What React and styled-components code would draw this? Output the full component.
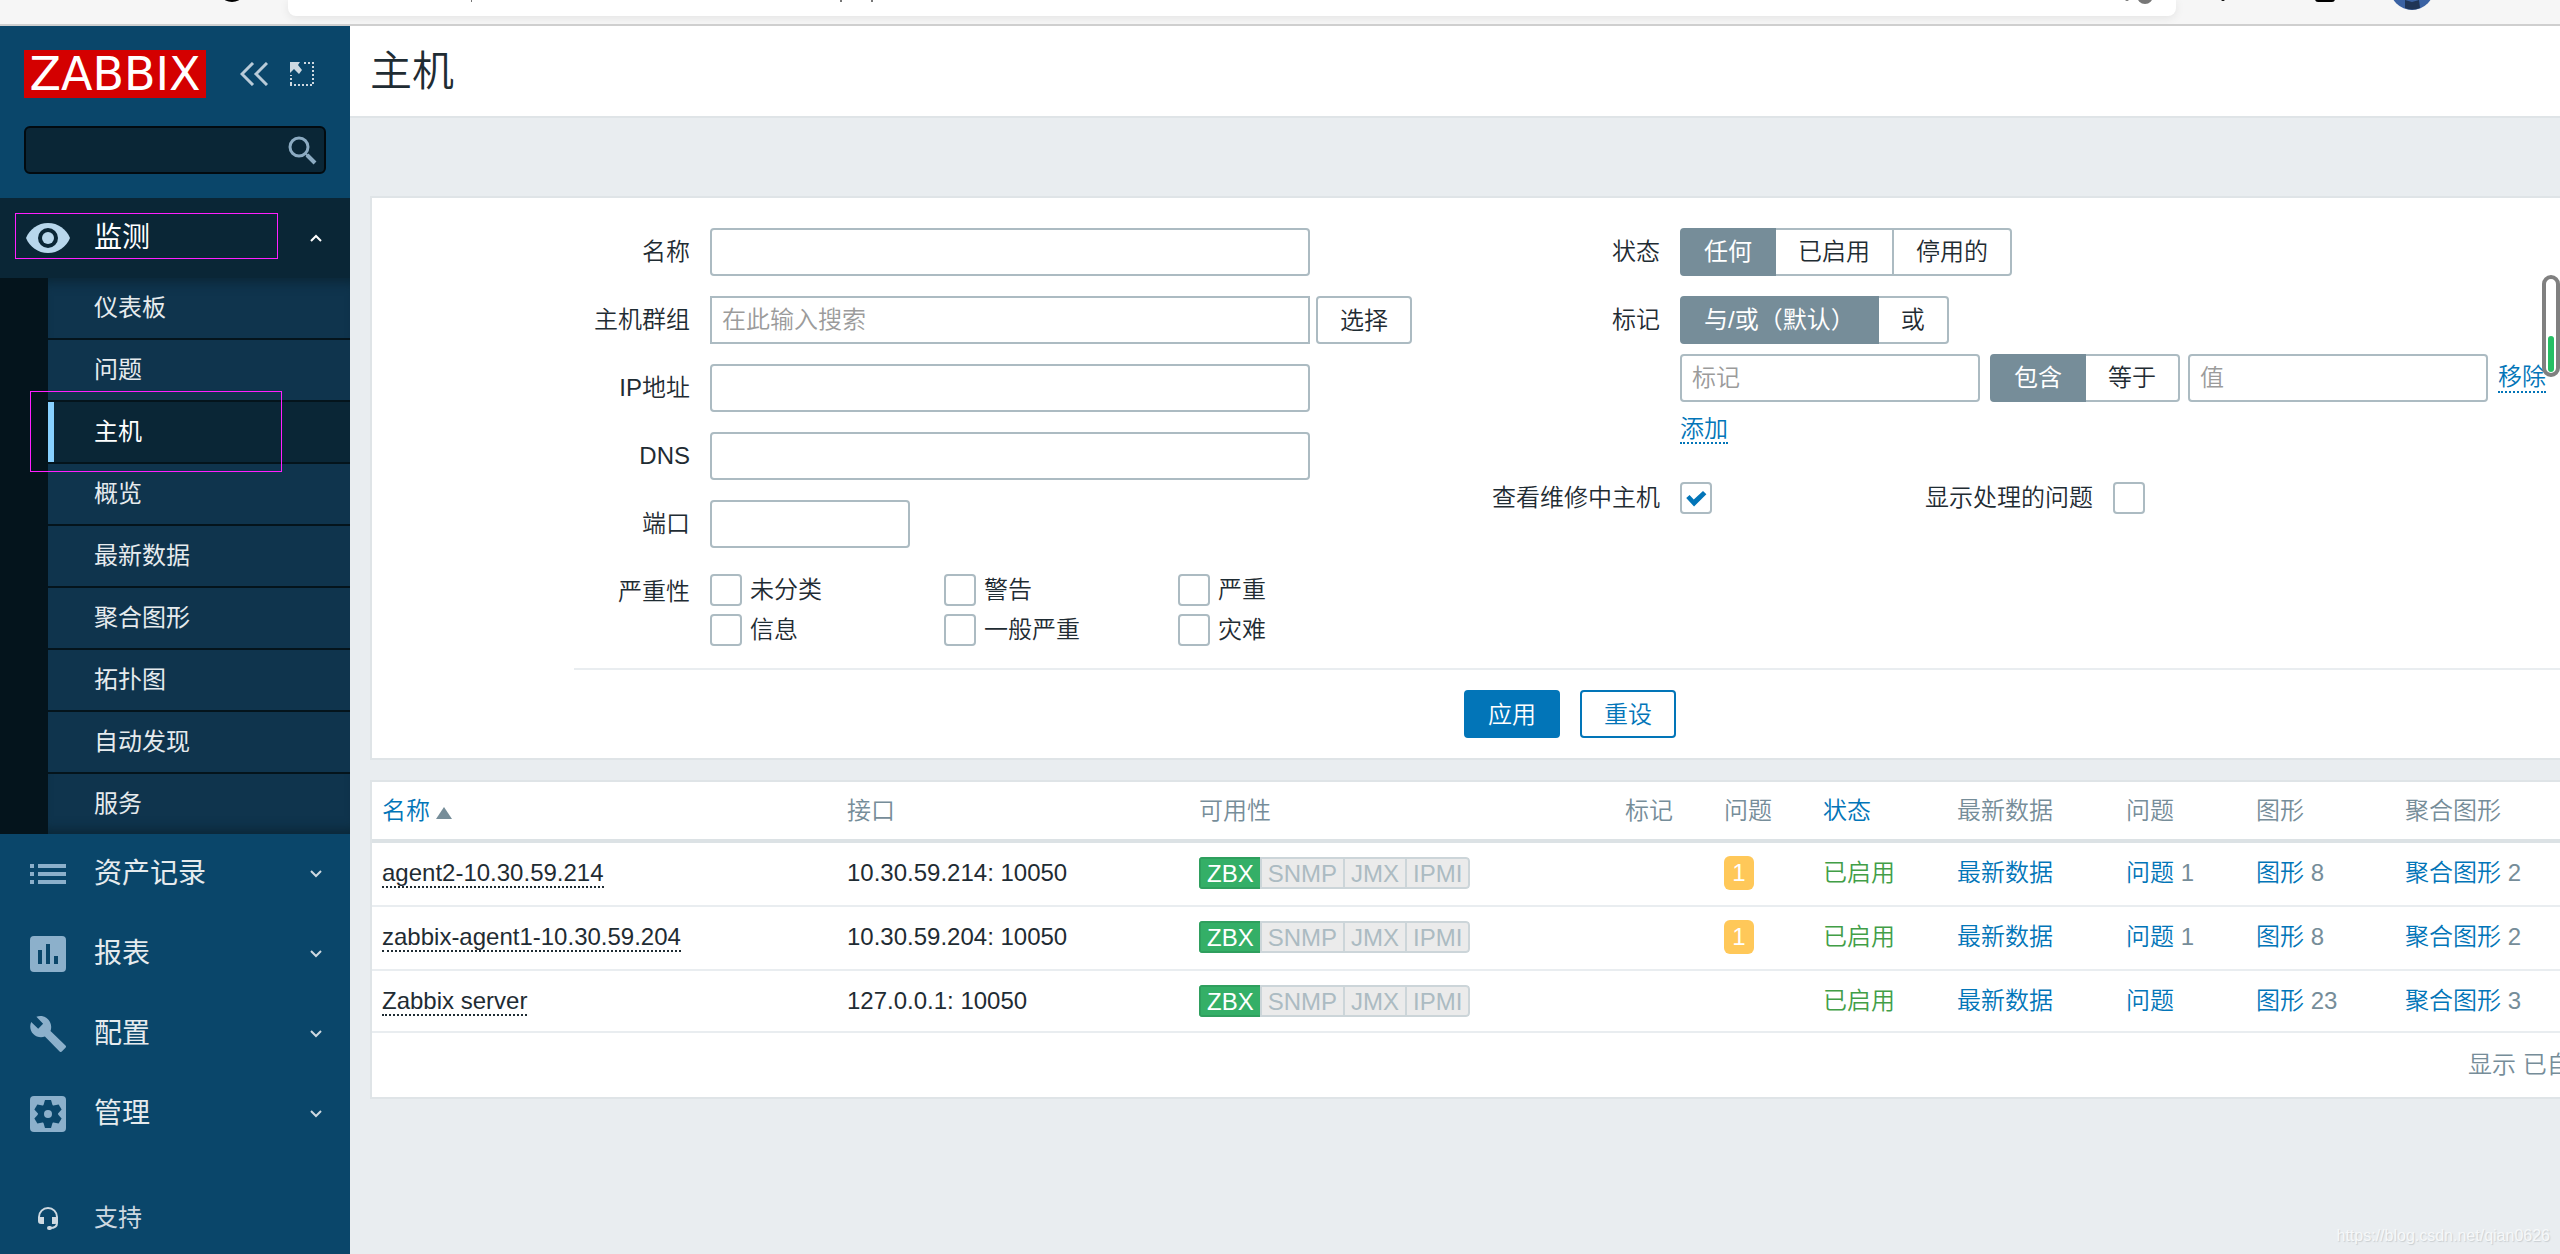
import React, { useState } from 'react';
import styled, { createGlobalStyle, css } from 'styled-components';

const GlobalStyle = createGlobalStyle`
  * {
    box-sizing: border-box;
  }

  body {
    margin: 0;
    background: #e9edf0;
    color: #1f2c33;
    font-family: 'Liberation Sans', 'Noto Sans CJK SC', sans-serif;
    font-size: 24px;
    line-height: 32px;
  }

  input,
  button {
    font: inherit;
    color: inherit;
  }
`;

const Page = styled.div`
  position: relative;
  display: flex;
  flex-direction: column;
  min-height: 100vh;
  overflow: hidden;
`;

/* browser bar */

const BrowserBar = styled.div`
  display: flex;
  height: 26px;
  background: #f6f6f6;
  border-bottom: 2px solid #cfcfcf;
  overflow: hidden;
`;

const BarSide = styled.svg`
  flex: none;
  width: ${(props) => props.$width}px;
  height: 24px;
`;

const AddressBox = styled.div`
  display: flex;
  flex: 1;
  justify-content: space-between;
  height: 16px;
  background: #fff;
  border-radius: 0 0 8px 8px;
  box-shadow: 0 2px 10px rgba(0, 0, 0, 0.08);
`;

const Body = styled.div`
  display: flex;
  flex: 1;
`;

/* sidebar */

const Sidebar = styled.aside`
  display: flex;
  flex-direction: column;
  flex: none;
  width: 350px;
  background: #0a466a;
  color: #e6ebee;
`;

const SidebarHeader = styled.div`
  display: flex;
  align-items: center;
  padding: 24px 36px 28px 24px;
`;

const Logo = styled.a`
  width: 182px;
  height: 48px;
  margin-right: 34px;
  background: #d40000;
  color: #fff;
  font-family: 'DejaVu Sans', sans-serif;
  font-size: 46px;
  line-height: 48px;
  text-align: center;
  text-decoration: none;
`;

const IconButton = styled.button`
  display: flex;
  padding: 0;
  margin-right: ${(props) => props.$gap || 0}px;
  border: 0;
  background: none;
`;

const SearchForm = styled.form`
  display: flex;
  align-items: center;
  height: 48px;
  margin: 0 24px 24px;
  padding-right: 7px;
  background: #0a2636;
  border: 2px solid #020a0f;
  border-radius: 6px;
`;

const SearchInput = styled.input`
  flex: 1;
  min-width: 0;
  height: 44px;
  border: 0;
  background: none;
  outline: none;
`;

const MenuLink = styled.a`
  position: relative;
  display: flex;
  align-items: center;
  height: 80px;
  padding: 0 28px 0 26px;
  color: ${(props) => (props.$open ? '#fff' : 'inherit')};
  background: ${(props) => (props.$open ? '#0a2636' : 'none')};
  font-size: 28px;
  text-decoration: none;
`;

const MenuIcon = styled.span`
  display: flex;
  justify-content: center;
  width: 44px;
  margin-right: 24px;
`;

const MenuText = styled.span`
  flex: 1;
`;

const SubMenu = styled.ul`
  margin: 0;
  padding: 0 0 0 48px;
  list-style: none;
  background: #04141c;
`;

const SubItem = styled.li`
  position: relative;
  height: 62px;
  border-bottom: 2px solid #04141c;

  &:last-child {
    height: 60px;
    border-bottom: 0;
  }

  &:first-child a {
    box-shadow: inset 0 12px 12px -8px #0a2636;
  }

  &:last-child a {
    box-shadow: inset 0 -12px 12px -8px #0a2636;
  }
`;

const SubLink = styled.a`
  display: flex;
  align-items: center;
  height: 60px;
  padding-left: ${(props) => (props.$active ? 40 : 46)}px;
  border-left: ${(props) => (props.$active ? '6px solid #87d0ff' : '0')};
  background: ${(props) => (props.$active ? '#0a2636' : '#0f344d')};
  color: ${(props) => (props.$active ? '#fff' : 'inherit')};
  text-decoration: none;
`;

/* hand-drawn frame over a menu entry */
const Marker = styled.span`
  position: absolute;
  z-index: 1;
  left: ${(props) => props.$left}px;
  top: ${(props) => props.$top}px;
  width: ${(props) => props.$width}px;
  height: ${(props) => props.$height}px;
  border: 1px solid #ff1fff;
  pointer-events: none;
`;

const SupportLink = styled.a`
  display: flex;
  align-items: center;
  height: 72px;
  margin-top: auto;
  padding-left: 26px;
  color: #ced9e1;
  text-decoration: none;
`;

/* content */

const Main = styled.main`
  flex: 1;
  min-width: 0;
  overflow: hidden;
  font-weight: 350;
`;

const TitleBar = styled.header`
  height: 92px;
  padding: 0 20px;
  background: #fff;
  border-bottom: 2px solid #dfe4e7;
`;

const Title = styled.h1`
  margin: 0;
  font-size: 42px;
  font-weight: 350;
  line-height: 92px;
`;

/* the content is wider than the window and runs out on the right */
const Content = styled.div`
  display: flex;
  flex-direction: column;
  gap: 20px;
  width: calc(100% + 210px);
  padding: 78px 0 20px 20px;
`;

const Panel = styled.section`
  background: #fff;
  border: 2px solid #dfe4e7;
`;

const Filter = styled.form`
  padding: 30px 0 20px;
`;

const FilterColumns = styled.div`
  display: flex;
  justify-content: center;
  gap: 80px;
  width: fit-content;
  margin: 0 auto;
  padding: 0 20px 22px;
  border-bottom: 2px solid #e9edf0;
`;

const FilterGrid = styled.div`
  display: grid;
  grid-template-columns: auto auto;
  align-content: start;
  gap: 20px;
`;

const Label = styled.label`
  line-height: 48px;
  text-align: right;
  white-space: nowrap;
`;

const Field = styled.div`
  display: flex;
  align-items: center;
  gap: ${(props) => props.$gap || 0}px;
  min-height: 48px;
`;

const FieldStack = styled.div`
  display: flex;
  flex-direction: column;
  gap: 10px;
`;

const TextInput = styled.input`
  width: ${(props) => props.$width}px;
  height: 48px;
  padding: 0 10px;
  background: #fff;
  border: 2px solid #acbbc2;
  border-radius: ${(props) => (props.$square ? 0 : 4)}px;
  outline: none;

  &::placeholder {
    color: #9b9b9b;
    opacity: 1;
  }
`;

const Button = styled.button`
  min-width: 96px;
  height: 48px;
  padding: 2px 22px 0;
  border: 2px solid #0275b8;
  border-radius: 4px;
  background: #fff;
  color: #0275b8;
  line-height: 42px;

  ${(props) =>
    props.$kind === 'primary' &&
    css`
      background: #0275b8;
      color: #fff;
    `}

  ${(props) =>
    props.$kind === 'grey' &&
    css`
      border-color: #acbbc2;
      color: #1f2c33;
    `}
`;

const Segments = styled.div`
  display: flex;
  margin-right: ${(props) => props.$after || 0}px;
`;

const Segment = styled.label`
  position: relative;
  height: 48px;
  padding: 0 22px;
  border: 2px solid #acbbc2;
  border-left-width: 0;
  line-height: 44px;
  white-space: nowrap;

  &:first-child {
    border-left-width: 2px;
    border-radius: 4px 0 0 4px;
  }

  &:last-child {
    border-radius: 0 4px 4px 0;
  }

  &:has(input:checked) {
    background: #768d99;
    border-color: #768d99;
    color: #fff;
    font-weight: 400;
  }

  input {
    position: absolute;
    inset: 0;
    margin: 0;
    opacity: 0;
  }
`;

const CheckInput = styled.input`
  appearance: none;
  flex: none;
  width: 32px;
  height: 32px;
  margin: 0;
  background: #fff;
  border: 2px solid #acbbc2;
  border-radius: 4px;

  &:checked::before {
    content: '';
    display: block;
    width: 28px;
    height: 28px;
    background: #0275b8;
    clip-path: polygon(15% 50%, 27% 39%, 42% 55%, 75% 25%, 87% 37%, 43% 80%);
  }
`;

const SeverityGrid = styled.div`
  display: grid;
  grid-template-columns: repeat(3, 234px);
  align-content: start;
  row-gap: 8px;
  padding-top: 6px;
`;

const CheckLabel = styled.label`
  display: flex;
  align-items: center;
  gap: 8px;
  height: 32px;
`;

const DottedLink = styled.a`
  border-bottom: 2px dotted;
  color: ${(props) => (props.$dark ? '#1f2c33' : '#0275b8')};
  line-height: 28px;
  text-decoration: none;
  white-space: nowrap;
`;

const CheckLine = styled.div`
  display: flex;
  align-items: center;
  height: 48px;
`;

const SecondLabel = styled(Label)`
  margin: 0 20px 0 213px;
`;

const AddLine = styled.div`
  height: 42px;
  line-height: 34px;
`;

const Actions = styled.div`
  display: flex;
  justify-content: center;
  gap: 20px;
  padding-top: 20px;
`;

const HostTable = styled.table`
  width: 100%;
  table-layout: fixed;
  border-collapse: separate;
  border-spacing: 0;

  th,
  td {
    padding: 0 10px;
    text-align: left;
    white-space: nowrap;
  }

  th {
    height: 61px;
    border-bottom: 4px solid #dce2e5;
    color: #768d99;
    font-weight: 350;
  }

  td {
    height: 64px;
    padding-bottom: 2px;
    border-bottom: 2px solid #e9edf0;
  }

  tr:last-child td {
    height: 62px;
    padding-bottom: 0;
  }
`;

const TextLink = styled.a`
  color: #0275b8;
  text-decoration: none;
`;

const SortArrow = styled.span`
  display: inline-block;
  margin-left: 6px;
  border: 8px solid transparent;
  border-top: 0;
  border-bottom: 12px solid #768d99;
`;

const StatusGroup = styled.div`
  display: flex;
  width: fit-content;
  border-radius: 4px;
  overflow: hidden;
`;

const StatusTag = styled.span`
  height: 32px;
  padding: 0 6px;
  border: 2px solid ${(props) => (props.$on ? '#2f9f5e' : '#ccd5d9')};
  border-right-width: 0;
  background: ${(props) => (props.$on ? '#34af67' : '#ebebeb')};
  color: ${(props) => (props.$on ? '#fff' : '#acbbc2')};
  line-height: 29px;

  &:last-child {
    border-right-width: 2px;
    border-radius: 0 4px 4px 0;
  }
`;

const ProblemCount = styled.a`
  display: inline-block;
  min-width: 30px;
  height: 34px;
  border-radius: 6px;
  background: #ffc859;
  color: #fff;
  line-height: 34px;
  text-align: center;
  text-decoration: none;
  vertical-align: middle;
`;

const Enabled = styled(TextLink)`
  color: #429e47;
`;

const Count = styled.span`
  color: #768d99;
`;

const TableFooter = styled.div`
  padding: 0 20px;
  color: #768d99;
  line-height: 64px;
  text-align: right;
`;

/* floating parts */

const Gauge = styled.div`
  position: absolute;
  right: 0;
  top: 275px;
  display: flex;
  align-items: flex-end;
  width: 18px;
  height: 102px;
  padding: 1px 2px;
  background: #fff;
  border: 4px solid #808080;
  border-radius: 9px;
`;

const GaugeBar = styled.div`
  width: 6px;
  height: 36px;
  border-radius: 3px;
  background: #26bf64;
`;

const Watermark = styled.div`
  position: absolute;
  right: 10px;
  bottom: 6px;
  color: #f6f8f9;
  font-size: 16px;
  line-height: 24px;
  text-shadow: 1px 1px 1px #c9ced1;
`;

const SUB_ITEMS = ['仪表板', '问题', '主机', '概览', '最新数据', '聚合图形', '拓扑图', '自动发现', '服务'];

const SEVERITIES = ['未分类', '警告', '严重', '信息', '一般严重', '灾难'];

const HOSTS = [
  { name: 'agent2-10.30.59.214', ip: '10.30.59.214: 10050', problems: 1, graphs: 8, screens: 2 },
  { name: 'zabbix-agent1-10.30.59.204', ip: '10.30.59.204: 10050', problems: 1, graphs: 8, screens: 2 },
  { name: 'Zabbix server', ip: '127.0.0.1: 10050', problems: 0, graphs: 23, screens: 3 },
];

// the name column takes what is left
const COLUMNS = [null, 352, 426, 99, 99, 134, 169, 130, 149, 373];

const Chevron = ({ up }) => (
  <svg width="12" height="8" viewBox="0 0 12 8" fill="none" stroke={up ? '#fff' : '#ced9e1'} strokeWidth="2">
    <path d={up ? 'M1 7l5-5 5 5' : 'M1 1l5 5 5-5'} />
  </svg>
);

const ListIcon = () => (
  <svg width="36" height="20" viewBox="0 0 36 20" fill="#8cb0cb">
    <path d="M0 0h4v4H0zM8 0h28v4H8zM0 8h4v4H0zM8 8h28v4H8zM0 16h4v4H0zM8 16h28v4H8z" />
  </svg>
);

const ReportIcon = () => (
  <svg width="36" height="36" viewBox="0 0 36 36" fill="#8cb0cb">
    <path
      fillRule="evenodd"
      d="M4 0h28a4 4 0 0 1 4 4v28a4 4 0 0 1-4 4H4a4 4 0 0 1-4-4V4a4 4 0 0 1 4-4zM8 14v14h4V14zM16 8v20h4V8zM24 20v8h4v-8z"
    />
  </svg>
);

const WrenchIcon = () => (
  <svg width="36" height="36" viewBox="0 0 36 36" fill="#8cb0cb">
    <path d="M35.500 29.500L20.500 15c1.500-4 .6-8.600-2.500-11.800C14.700 0 10 -.7 6.400 .8l6.700 6.900-4.900 5.100L1.200 6C-.6 9.800 .1 14.700 3.300 18c3.200 3.200 7.700 4 11.600 2.500l14.700 15c.6.7 1.600.7 2.200 0l3.700-3.800c.7-.6.7-1.600 0-2.200z" />
  </svg>
);

const GearIcon = () => (
  <svg width="36" height="36" viewBox="0 0 36 36">
    <rect width="36" height="36" rx="4" fill="#8cb0cb" />
    <g fill="#0a466a">
      <circle cx="18" cy="18" r="10" />
      {[0, 60, 120].map((angle) => (
        <path key={angle} d="M15 4h6l1.500 5v18L21 32h-6l-1.500-5V9z" transform={`rotate(${angle} 18 18)`} />
      ))}
    </g>
    <circle cx="18" cy="18" r="4" fill="#8cb0cb" />
  </svg>
);

const EyeIcon = () => (
  <svg width="44" height="30" viewBox="0 0 44 30">
    <path d="M22 0C12 0 3.500 6.200 0 15c3.500 8.800 12 15 22 15s18.500-6.200 22-15C40.500 6.200 32 0 22 0z" fill="#b8d7ec" />
    <circle cx="22" cy="15" r="10" fill="#0a2636" />
    <circle cx="22" cy="15" r="6" fill="#b8d7ec" />
  </svg>
);

const SECTIONS = [
  { text: '资产记录', Icon: ListIcon },
  { text: '报表', Icon: ReportIcon },
  { text: '配置', Icon: WrenchIcon },
  { text: '管理', Icon: GearIcon },
];

const RadioGroup = ({ name, options, after }) => {
  const [value, setValue] = useState(options[0]);
  return (
    <Segments $after={after} role="radiogroup">
      {options.map((option) => (
        <Segment key={option}>
          <input type="radio" name={name} checked={value === option} onChange={() => setValue(option)} />
          {option}
        </Segment>
      ))}
    </Segments>
  );
};

const TopBar = () => (
  <BrowserBar>
    <BarSide $width={288} viewBox="0 0 288 24">
      <ellipse cx="232" cy="-3" rx="9" ry="5" fill="#000" />
    </BarSide>
    <AddressBox>
      <BarSide $width={600} viewBox="0 0 600 24" fill="#777">
        <path d="M183 0h1v2h-1zM552 0h2v2h-2zM583 0h2v2h-2z" />
      </BarSide>
      <BarSide $width={60} viewBox="0 0 60 24" fill="#777">
        <circle cx="11" cy="-1" r="2" />
        <circle cx="29" cy="-4" r="8" />
      </BarSide>
    </AddressBox>
    <BarSide $width={384} viewBox="0 0 384 24">
      <circle cx="47" cy="-1" r="2" />
      <rect x="139" y="-6" width="20" height="8" rx="3" />
      <circle cx="236" cy="-12" r="22" fill="#3a62a3" />
      <path d="M229 0l7 2 7-2 1 8q-8 3-15 0z" fill="#1f3556" />
    </BarSide>
  </BrowserBar>
);

const SideMenu = () => (
  <Sidebar>
    <SidebarHeader>
      <Logo href="#home">ZABBIX</Logo>
      <IconButton type="button" aria-label="折叠" $gap={22}>
        <svg width="28" height="24" viewBox="0 0 28 24" fill="none" stroke="#b9cbd8" strokeWidth="3">
          <path d="M13 1L2 12l11 11M27 1L16 12l11 11" />
        </svg>
      </IconButton>
      <IconButton type="button" aria-label="隐藏">
        <svg width="24" height="24" viewBox="0 0 24 24" fill="#ced9e1">
          <path d="M0 0h10L8 3l4 5-3 4-5-5-4 4z" />
          <path
            d="M14 1h10M23 4v20M22 23H0M1 22v-9"
            fill="none"
            stroke="#ced9e1"
            strokeWidth="2"
            strokeDasharray="2 2"
          />
        </svg>
      </IconButton>
    </SidebarHeader>
    <SearchForm onSubmit={(e) => e.preventDefault()}>
      <SearchInput type="text" aria-label="搜索" />
      <IconButton type="submit" aria-label="搜索">
        <svg width="30" height="30" viewBox="0 0 30 30" fill="none" stroke="#8cabc2">
          <circle cx="12" cy="12" r="9" strokeWidth="3" />
          <path d="M18 18l3 3" strokeWidth="2" />
          <path d="M20 20l8 8" strokeWidth="4" />
        </svg>
      </IconButton>
    </SearchForm>
    <nav>
      <MenuLink href="#monitoring" $open>
        <MenuIcon>
          <EyeIcon />
        </MenuIcon>
        <MenuText>监测</MenuText>
        <Chevron up />
        <Marker $left={15} $top={15} $width={263} $height={46} />
      </MenuLink>
      <SubMenu>
        {SUB_ITEMS.map((text) => (
          <SubItem key={text}>
            <SubLink href="#sub" $active={text === '主机'}>
              {text}
            </SubLink>
            {text === '主机' && <Marker $left={-18} $top={-11} $width={252} $height={81} />}
          </SubItem>
        ))}
      </SubMenu>
      {SECTIONS.map(({ text, Icon }) => (
        <MenuLink key={text} href="#section">
          <MenuIcon>
            <Icon />
          </MenuIcon>
          <MenuText>{text}</MenuText>
          <Chevron />
        </MenuLink>
      ))}
    </nav>
    <SupportLink href="#support">
      <MenuIcon>
        <svg width="22" height="24" viewBox="0 0 22 24" fill="#ced9e1">
          <path
            d="M2 12v-1a9 9 0 0 1 18 0v6q0 5-7 5"
            fill="none"
            stroke="#ced9e1"
            strokeWidth="2"
          />
          <path d="M1 11h6v7H4q-3 0-3-3zM15 11h6v4q0 3-3 3h-3z" />
          <rect x="10" y="20" width="5" height="4" rx="2" />
        </svg>
      </MenuIcon>
      支持
    </SupportLink>
  </Sidebar>
);

const HostFilter = () => (
  <Panel>
    <Filter onSubmit={(e) => e.preventDefault()}>
      <FilterColumns>
        <FilterGrid>
          <Label htmlFor="name">名称</Label>
          <TextInput id="name" type="text" $width={600} />
          <Label htmlFor="groups">主机群组</Label>
          <Field $gap={6}>
            <TextInput id="groups" type="text" placeholder="在此输入搜索" $width={600} $square />
            <Button type="button" $kind="grey">
              选择
            </Button>
          </Field>
          <Label htmlFor="ip">IP地址</Label>
          <TextInput id="ip" type="text" $width={600} />
          <Label htmlFor="dns">DNS</Label>
          <TextInput id="dns" type="text" $width={600} />
          <Label htmlFor="port">端口</Label>
          <TextInput id="port" type="text" $width={200} />
          <Label as="span">严重性</Label>
          <SeverityGrid>
            {SEVERITIES.map((text) => (
              <CheckLabel key={text}>
                <CheckInput type="checkbox" />
                {text}
              </CheckLabel>
            ))}
          </SeverityGrid>
        </FilterGrid>

        <FilterGrid>
          <Label as="span">状态</Label>
          <RadioGroup name="status" options={['任何', '已启用', '停用的']} />
          <Label as="span">标记</Label>
          <FieldStack>
            <RadioGroup name="evaltype" options={['与/或（默认）', '或']} />
            <Field>
              <Field $gap={10}>
                <TextInput type="text" aria-label="标记" placeholder="标记" $width={300} />
                <RadioGroup name="operator" options={['包含', '等于']} after={8} />
              </Field>
              <Field $gap={10}>
                <TextInput type="text" aria-label="值" placeholder="值" $width={300} />
                <DottedLink href="#remove">移除</DottedLink>
              </Field>
            </Field>
            <AddLine>
              <DottedLink href="#add">添加</DottedLink>
            </AddLine>
          </FieldStack>
          <Label htmlFor="maintenance">查看维修中主机</Label>
          <CheckLine>
            <CheckInput id="maintenance" type="checkbox" defaultChecked />
            <SecondLabel htmlFor="suppressed">显示处理的问题</SecondLabel>
            <CheckInput id="suppressed" type="checkbox" />
          </CheckLine>
        </FilterGrid>
      </FilterColumns>
      <Actions>
        <Button type="submit" $kind="primary">
          应用
        </Button>
        <Button type="reset">重设</Button>
      </Actions>
    </Filter>
  </Panel>
);

const HostList = () => (
  <Panel>
    <HostTable>
      <colgroup>
        {COLUMNS.map((width, i) => (
          <col key={i} width={width || undefined} />
        ))}
      </colgroup>
      <thead>
        <tr>
          <th>
            <TextLink href="#sort">
              名称
              <SortArrow />
            </TextLink>
          </th>
          <th>接口</th>
          <th>可用性</th>
          <th>标记</th>
          <th>问题</th>
          <th>
            <TextLink href="#sort">状态</TextLink>
          </th>
          <th>最新数据</th>
          <th>问题</th>
          <th>图形</th>
          <th>聚合图形</th>
        </tr>
      </thead>
      <tbody>
        {HOSTS.map((host) => (
          <tr key={host.name}>
            <td>
              <DottedLink href="#host" $dark>
                {host.name}
              </DottedLink>
            </td>
            <td>{host.ip}</td>
            <td>
              <StatusGroup>
                <StatusTag $on>ZBX</StatusTag>
                <StatusTag>SNMP</StatusTag>
                <StatusTag>JMX</StatusTag>
                <StatusTag>IPMI</StatusTag>
              </StatusGroup>
            </td>
            <td />
            <td>{host.problems > 0 && <ProblemCount href="#problems">{host.problems}</ProblemCount>}</td>
            <td>
              <Enabled href="#status">已启用</Enabled>
            </td>
            <td>
              <TextLink href="#latest">最新数据</TextLink>
            </td>
            <td>
              <TextLink href="#problems">问题</TextLink> <Count>{host.problems || ''}</Count>
            </td>
            <td>
              <TextLink href="#graphs">图形</TextLink> <Count>{host.graphs}</Count>
            </td>
            <td>
              <TextLink href="#screens">聚合图形</TextLink> <Count>{host.screens}</Count>
            </td>
          </tr>
        ))}
      </tbody>
    </HostTable>
    <TableFooter>显示 已自动发现的 3中的3</TableFooter>
  </Panel>
);

const App = () => {
  return (
    <Page>
      <GlobalStyle />
      <TopBar />
      <Body>
        <SideMenu />
        <Main>
          <TitleBar>
            <Title>主机</Title>
          </TitleBar>
          <Content>
            <HostFilter />
            <HostList />
          </Content>
        </Main>
      </Body>
      <Gauge>
        <GaugeBar />
      </Gauge>
      <Watermark>https://blog.csdn.net/qian0626</Watermark>
    </Page>
  );
};

export default App;
